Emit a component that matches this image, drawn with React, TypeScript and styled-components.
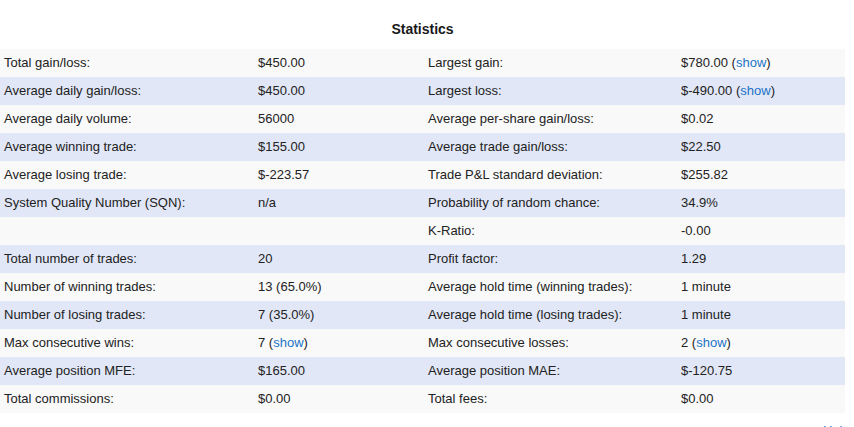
import React from 'react';
import styled, { createGlobalStyle } from 'styled-components';

const GlobalStyle = createGlobalStyle`
	html, body {
		margin: 0;
		padding: 0;
		background: #ffffff;
	}
	body {
		font-family: "Liberation Sans", Arial, Helvetica, sans-serif;
		color: #222222;
		font-size: 13px;
	}
`;

const Page = styled.div`
	width: 845px;
`;

const Title = styled.h3`
	margin: 0;
	height: 49px;
	line-height: 58px;
	text-align: center;
	font-size: 14px;
	font-weight: 700;
	color: #1a1a1a;
`;

const Table = styled.table`
	width: 845px;
	border-collapse: collapse;
	table-layout: fixed;
`;

const Row = styled.tr<{ $alt: boolean }>`
	height: 28px;
	background-color: ${(p) => (p.$alt ? '#e1e7f6' : '#f9f9f9')};
`;

const Cell = styled.td<{ $w: number }>`
	width: ${(p) => p.$w}px;
	padding: 0 4px 2px;
	box-sizing: border-box;
	white-space: nowrap;
	vertical-align: middle;
	line-height: 15px;
`;

const Link = styled.a`
	color: #1a73c6;
	text-decoration: none;
`;

const Footer = styled.div`
	margin-top: 10px;
	padding-left: 823px;
	line-height: 15px;
	height: 4px;
	overflow: hidden;
`;

type Stat = { label: string; value: string; show?: boolean };

const rows: [Stat, Stat][] = [
	[{ label: 'Total gain/loss:', value: '$450.00' }, { label: 'Largest gain:', value: '$780.00', show: true }],
	[{ label: 'Average daily gain/loss:', value: '$450.00' }, { label: 'Largest loss:', value: '$-490.00', show: true }],
	[{ label: 'Average daily volume:', value: '56000' }, { label: 'Average per-share gain/loss:', value: '$0.02' }],
	[{ label: 'Average winning trade:', value: '$155.00' }, { label: 'Average trade gain/loss:', value: '$22.50' }],
	[{ label: 'Average losing trade:', value: '$-223.57' }, { label: 'Trade P&L standard deviation:', value: '$255.82' }],
	[{ label: 'System Quality Number (SQN):', value: 'n/a' }, { label: 'Probability of random chance:', value: '34.9%' }],
	[{ label: '', value: '' }, { label: 'K-Ratio:', value: '-0.00' }],
	[{ label: 'Total number of trades:', value: '20' }, { label: 'Profit factor:', value: '1.29' }],
	[{ label: 'Number of winning trades:', value: '13 (65.0%)' }, { label: 'Average hold time (winning trades):', value: '1 minute' }],
	[{ label: 'Number of losing trades:', value: '7 (35.0%)' }, { label: 'Average hold time (losing trades):', value: '1 minute' }],
	[{ label: 'Max consecutive wins:', value: '7', show: true }, { label: 'Max consecutive losses:', value: '2', show: true }],
	[{ label: 'Average position MFE:', value: '$165.00' }, { label: 'Average position MAE:', value: '$-120.75' }],
	[{ label: 'Total commissions:', value: '$0.00' }, { label: 'Total fees:', value: '$0.00' }],
];

const Value: React.FC<{ stat: Stat }> = ({ stat }) => (
	<>
		{stat.value}
		{stat.show && (
			<>
				{' ('}
				<Link href="#">show</Link>
				{')'}
			</>
		)}
	</>
);

const App: React.FC = () => {
	return (
		<Page>
			<GlobalStyle />
			<Title>Statistics</Title>
			<Table>
				<tbody>
					{rows.map(([left, right], i) => (
						<Row key={i} $alt={i % 2 === 1}>
							<Cell $w={254}>{left.label}</Cell>
							<Cell $w={170}>
								<Value stat={left} />
							</Cell>
							<Cell $w={253}>{right.label}</Cell>
							<Cell $w={168}>
								<Value stat={right} />
							</Cell>
						</Row>
					))}
				</tbody>
			</Table>
			<Footer>
				<Link href="#">Help</Link>
			</Footer>
		</Page>
	);
};

export default App;
